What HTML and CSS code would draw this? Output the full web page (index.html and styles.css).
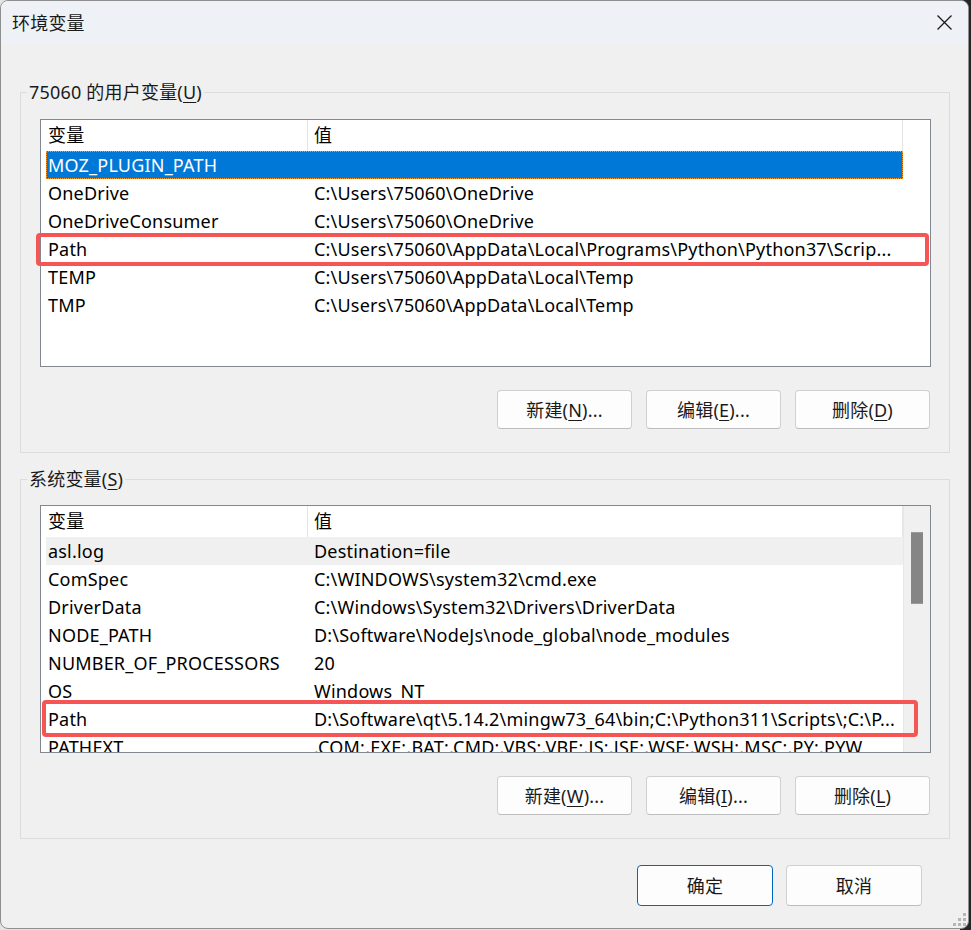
FILE: index.html
```html
<!DOCTYPE html>
<html lang="zh-CN">
<head>
    <meta charset="UTF-8">
    <title>环境变量</title>
    <link rel="stylesheet" href="styles.css">
</head>
<body>
<div class="dialog">
    <div class="dialog-title">
        <span class="dialog-title-text">环境变量</span>
        <span class="dialog-close">
            <svg width="15" height="15" viewBox="0 0 15 15"><path d="M0.5 0.5L14.5 14.5M14.5 0.5L0.5 14.5" stroke="#1a1a1a" stroke-width="1.3"/></svg>
        </span>
    </div>

    <div class="dialog-body">
        <fieldset class="group group-user">
            <legend class="group-title">75060 的用户变量(<u>U</u>)</legend>
            <div class="list-wrap">
                <div class="list">
                    <div class="list-main">
                        <div class="list-header">
                            <div class="list-header-name">变量</div>
                            <div class="list-header-value">值</div>
                        </div>
                        <div class="list-row selected"><span class="cell-name">MOZ_PLUGIN_PATH</span><span class="cell-value"></span></div>
                        <div class="list-row"><span class="cell-name">OneDrive</span><span class="cell-value">C:\Users\75060\OneDrive</span></div>
                        <div class="list-row"><span class="cell-name">OneDriveConsumer</span><span class="cell-value">C:\Users\75060\OneDrive</span></div>
                        <div class="list-row"><span class="cell-name">Path</span><span class="cell-value">C:\Users\75060\AppData\Local\Programs\Python\Python37\Scrip...</span></div>
                        <div class="list-row"><span class="cell-name">TEMP</span><span class="cell-value">C:\Users\75060\AppData\Local\Temp</span></div>
                        <div class="list-row"><span class="cell-name">TMP</span><span class="cell-value">C:\Users\75060\AppData\Local\Temp</span></div>
                    </div>
                    <div class="list-side"></div>
                </div>
                <i class="mark mark-user"></i>
            </div>
            <div class="btn-row">
                <button class="btn">新建(<u>N</u>)...</button>
                <button class="btn">编辑(<u>E</u>)...</button>
                <button class="btn">删除(<u>D</u>)</button>
            </div>
        </fieldset>

        <fieldset class="group group-system">
            <legend class="group-title">系统变量(<u>S</u>)</legend>
            <div class="list-wrap">
                <div class="list">
                    <div class="list-main">
                        <div class="list-header">
                            <div class="list-header-name">变量</div>
                            <div class="list-header-value">值</div>
                        </div>
                        <div class="list-row hover"><span class="cell-name">asl.log</span><span class="cell-value">Destination=file</span></div>
                        <div class="list-row"><span class="cell-name">ComSpec</span><span class="cell-value">C:\WINDOWS\system32\cmd.exe</span></div>
                        <div class="list-row"><span class="cell-name">DriverData</span><span class="cell-value">C:\Windows\System32\Drivers\DriverData</span></div>
                        <div class="list-row"><span class="cell-name">NODE_PATH</span><span class="cell-value">D:\Software\NodeJs\node_global\node_modules</span></div>
                        <div class="list-row"><span class="cell-name">NUMBER_OF_PROCESSORS</span><span class="cell-value">20</span></div>
                        <div class="list-row"><span class="cell-name">OS</span><span class="cell-value">Windows_NT</span></div>
                        <div class="list-row"><span class="cell-name">Path</span><span class="cell-value">D:\Software\qt\5.14.2\mingw73_64\bin;C:\Python311\Scripts\;C:\P...</span></div>
                        <div class="list-row"><span class="cell-name">PATHEXT</span><span class="cell-value">.COM;.EXE;.BAT;.CMD;.VBS;.VBE;.JS;.JSE;.WSF;.WSH;.MSC;.PY;.PYW</span></div>
                        <div class="list-row"><span class="cell-name">PROCESSOR_ARCHITECTURE</span><span class="cell-value">AMD64</span></div>
                    </div>
                    <div class="list-side scrollbar"><i class="scrollbar-thumb"></i></div>
                </div>
                <i class="mark mark-system"></i>
            </div>
            <div class="btn-row">
                <button class="btn">新建(<u>W</u>)...</button>
                <button class="btn">编辑(<u>I</u>)...</button>
                <button class="btn">删除(<u>L</u>)</button>
            </div>
        </fieldset>

        <div class="dialog-footer">
            <button class="btn btn-default">确定</button>
            <button class="btn">取消</button>
        </div>
    </div>

    <svg class="grip" width="14" height="14" viewBox="0 0 14 14">
        <rect x="10" y="0" width="3" height="3" fill="#b5b5b5"/>
        <rect x="5" y="5" width="3" height="3" fill="#b5b5b5"/>
        <rect x="10" y="5" width="3" height="3" fill="#b5b5b5"/>
        <rect x="0" y="10" width="3" height="3" fill="#b5b5b5"/>
        <rect x="5" y="10" width="3" height="3" fill="#b5b5b5"/>
        <rect x="10" y="10" width="3" height="3" fill="#b5b5b5"/>
    </svg>
</div>
</body>
</html>
```

FILE: styles.css
```css
html,
body {
    margin: 0;
    height: 100%;
}
body {
    background: linear-gradient(to right, #e4e4e4 0, #e4e4e4 960px, #262626 960px);
    font-family: "Noto Sans", "Noto Sans CJK SC", sans-serif;
    font-size: 18px;
    letter-spacing: .2px;
    color: #000;
    overflow: hidden;
}
u {
    text-decoration-thickness: 1px;
    text-underline-offset: 3px;
}

.dialog {
    position: relative;
    width: 969px;
    height: 929px;
    box-sizing: border-box;
    border: 1px solid #8f8f8f;
    border-radius: 8px;
    background-color: #f0f0f0;
    overflow: hidden;
}
.dialog-title {
    display: flex;
    align-items: center;
    justify-content: space-between;
    height: 43px;
    padding: 0 16px 0 11px;
    background-color: #eef2f7;
}
.dialog-title-text {
    line-height: 22px;
    color: #1a1a1a;
}
.dialog-close {
    display: flex;
    margin-top: -1px;
}
.dialog-body {
    padding: 37px 18px 0 19px;
}

/* 分组框 */
.group {
    margin: 0 0 15px;
    padding: 16px 18px 23px 19px;
    border: 1px solid #dcdcdc;
    min-width: 0;
}
.group-system {
    padding-top: 15px;
}
.group-title {
    margin-left: -13px;
    padding: 0 2px;
    line-height: 22px;
    color: #1a1a1a;
}

/* 列表 */
.list-wrap {
    position: relative;
}
.list {
    display: flex;
    height: 248px;
    box-sizing: border-box;
    border: 1px solid #828790;
    background-color: #fff;
    overflow: hidden;
}
.list-main {
    width: 862px;
}
.list-side {
    flex: 1;
}
.list-header {
    display: flex;
    height: 31px;
    line-height: 31px;
}
.list-header-name {
    width: 259px;
    padding-left: 7px;
    border-right: 1px solid #e5e5e5;
}
.list-header-value {
    width: 588px;
    padding-left: 6px;
    border-right: 1px solid #e5e5e5;
}
.list-row {
    display: flex;
    width: 857px;
    height: 28px;
    margin-left: 5px;
    line-height: 28px;
    white-space: nowrap;
    overflow: hidden;
}
.list-row.selected {
    background-color: #0078d7;
    color: #fff;
    outline: 1px dotted #ff9b2f;
    outline-offset: -1px;
}
.list-row.hover {
    background-color: #f0f0f0;
}
.cell-name {
    flex: none;
    width: 266px;
    padding-left: 2px;
}
.cell-value {
    flex: none;
}

.scrollbar {
    position: relative;
    background-color: #f0f0f0;
    border-left: 1px solid #e8e8e8;
}
.scrollbar-thumb {
    position: absolute;
    left: 7px;
    top: 26px;
    width: 12px;
    height: 72px;
    background-color: #858585;
    border-top: 1px solid #9a9a9a;
    border-bottom: 1px solid #9a9a9a;
    box-sizing: border-box;
}

/* 红色标注框 */
.mark {
    position: absolute;
    box-sizing: border-box;
    border: 4px solid #f65555;
    border-radius: 4px;
}
.mark-user {
    left: -4px;
    top: 114px;
    width: 893px;
    height: 33px;
}
.mark-system {
    left: 2px;
    top: 195px;
    width: 876px;
    height: 37px;
}

/* 按钮 */
.btn-row {
    display: flex;
    justify-content: flex-end;
    gap: 14px;
    margin-top: 23px;
    padding-right: 1px;
}
.btn {
    width: 135px;
    height: 39px;
    margin: 0;
    padding: 0;
    border: 1px solid #d0d0d0;
    border-bottom-color: #bdbdbd;
    border-radius: 4px;
    background-color: #fdfdfd;
    font: inherit;
    letter-spacing: inherit;
    color: #1a1a1a;
    line-height: 22px;
}
.dialog-footer {
    display: flex;
    justify-content: flex-end;
    gap: 13px;
    margin-top: 26px;
    padding-right: 28px;
}
.dialog-footer .btn {
    width: 136px;
    height: 41px;
}
.btn-default {
    border: 1px solid #0067c0;
    box-shadow: inset 0 0 0 1px #ffffff;
}

.grip {
    position: absolute;
    right: 1px;
    bottom: 1px;
}
```
